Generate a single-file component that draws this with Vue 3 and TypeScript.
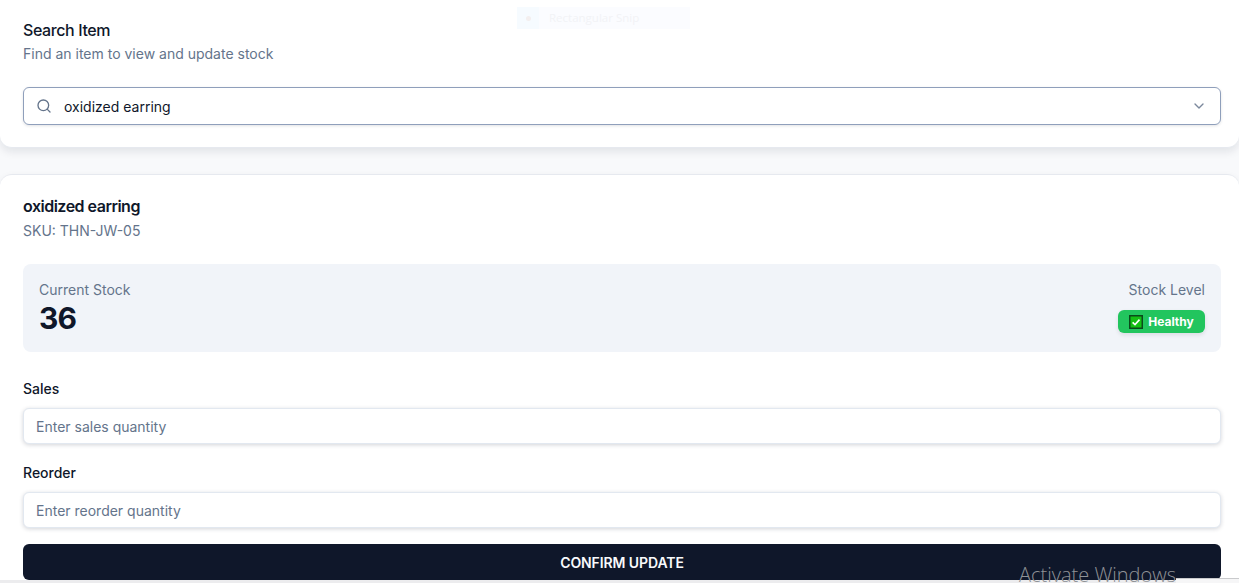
<script setup lang="ts">
const itemName: string = 'oxidized earring'
</script>

<template>
  <div class="page">
    <section class="card search-card">
      <h2 class="title">Search Item</h2>
      <p class="sub">Find an item to view and update stock</p>
      <div class="combo">
        <svg class="ico" width="16" height="16" viewBox="0 0 24 24" fill="none" stroke="#64748b" stroke-width="2" stroke-linecap="round" stroke-linejoin="round"><circle cx="11" cy="11" r="8" /><path d="m21 21-4.3-4.3" /></svg>
        <span class="combo-text">{{ itemName }}</span>
        <svg class="chev" width="16" height="16" viewBox="0 0 24 24" fill="none" stroke="#64748b" stroke-width="2" stroke-linecap="round" stroke-linejoin="round"><path d="m6 9 6 6 6-6" /></svg>
      </div>
    </section>

    <section class="card item-card">
      <h2 class="title name">{{ itemName }}</h2>
      <p class="sku">SKU: THN-JW-05</p>

      <div class="stock">
        <div class="stock-left">
          <div class="muted">Current Stock</div>
          <div class="num">36</div>
        </div>
        <div class="stock-right">
          <div class="muted">Stock Level</div>
          <span class="badge"><span class="emoji"><svg width="14" height="14" viewBox="0 0 14 14"><rect x="0.75" y="0.75" width="12.5" height="12.5" fill="#14bf14" stroke="#0a4a1c" stroke-width="1.5" /><path d="M3.6 7.3 6 9.6 10.5 4.6" fill="none" stroke="#fff" stroke-width="1.6" /></svg></span>Healthy</span>
        </div>
      </div>

      <label class="lbl">Sales</label>
      <input class="field" placeholder="Enter sales quantity" />
      <label class="lbl lbl2">Reorder</label>
      <input class="field" placeholder="Enter reorder quantity" />
      <button class="confirm">CONFIRM UPDATE</button>
    </section>

    <div class="snip"><span class="snip-ico"><i></i></span><span class="snip-text">Rectangular Snip</span></div>
    <div class="strip"></div>
    <div class="edge"></div>
    <div class="activate">Activate Windows</div>
  </div>
</template>

<style>
html, body { margin: 0; padding: 0; background: #f8f9fb; overflow: hidden; }
</style>

<style scoped>
.page {
  position: relative;
  width: 1239px;
  height: 583px;
  overflow: hidden;
  font-family: Inter, "Liberation Sans", sans-serif;
  color: #0f172a;
  background: #f8f9fb;
}
.card {
  background: #fff;
  border-radius: 12px;
  box-sizing: border-box;
  padding-left: 23px;
  padding-right: 18px;
  box-shadow: 0 4px 8px rgba(15, 23, 42, 0.09);
}
.search-card {
  margin-top: -12px;
  height: 160px;
  padding-top: 31px;
  border-bottom: 1px solid #e6e9ef;
}
.item-card {
  margin-top: 26px;
  padding-top: 20px;
  height: 440px;
  border-top: 1px solid #e6e9ef;
}
.title {
  margin: 0;
  font-size: 16px;
  line-height: 22px;
  font-weight: 500;
  letter-spacing: -0.4px;
}
.name { font-weight: 600; letter-spacing: -0.5px; }
.sub {
  margin: 3px 0 0;
  font-size: 14px;
  line-height: 20px;
  color: #64748b;
}
.combo {
  margin-top: 23px;
  height: 38px;
  box-sizing: border-box;
  border: 1px solid #8f9fbb;
  border-radius: 6px;
  display: flex;
  align-items: center;
  padding: 0 13px 0 12px;
  box-shadow: 0 1px 3px rgba(15, 23, 42, 0.12);
  background: #fff;
}
.combo-text { margin-left: 12px; font-size: 14px; flex: 1; color: #0f172a; }
.chev { opacity: 0.85; }
.sku {
  margin: 4px 0 0;
  font-size: 14px;
  line-height: 20px;
  color: #64748b;
}
.stock {
  margin-top: 23px;
  height: 88px;
  background: #f1f4f9;
  border-radius: 8px;
  box-sizing: border-box;
  padding: 16px;
  display: flex;
  justify-content: space-between;
}
.muted { font-size: 14px; line-height: 20px; color: #64748b; }
.num { font-size: 30px; line-height: 36px; font-weight: 700; letter-spacing: -0.75px; color: #0f172a; }
.stock-right { display: flex; flex-direction: column; align-items: flex-end; }
.badge {
  margin-top: 10px;
  height: 23px;
  width: 87px;
  box-sizing: border-box;
  background: #22c55e;
  color: #fff;
  font-size: 12px;
  font-weight: 700;
  border-radius: 6px;
  display: inline-flex;
  align-items: center;
  justify-content: center;
  gap: 5px;
  box-shadow: 0 2px 4px rgba(15, 23, 42, 0.1);
}
.emoji { display: inline-flex; }
.lbl {
  display: block;
  margin-top: 27px;
  font-size: 14px;
  line-height: 20px;
  font-weight: 500;
}
.lbl2 { margin-top: 19px; }
.field {
  display: block;
  width: 100%;
  height: 36px;
  margin-top: 9px;
  box-sizing: border-box;
  border: 1px solid #e2e8f0;
  border-radius: 6px;
  padding: 0 12px;
  font: 14px Inter, "Liberation Sans", sans-serif;
  color: #0f172a;
  background: #fff;
  box-shadow: 0 1px 4px rgba(15, 23, 42, 0.18);
  outline: none;
}
.field::placeholder { color: #64748b; opacity: 1; }
.confirm {
  display: block;
  width: 100%;
  height: 36px;
  margin-top: 16px;
  border: 0;
  border-radius: 6px;
  background: #0f172a;
  color: #f8fafc;
  font: 600 14px Inter, "Liberation Sans", sans-serif;
  letter-spacing: -0.1px;
}
.snip {
  position: absolute;
  left: 517px;
  top: 7px;
  width: 173px;
  height: 22px;
  display: flex;
  background: #fbfcff;
}
.snip-ico {
  width: 22px;
  height: 22px;
  background: #f6fbff;
  display: flex;
  align-items: center;
  justify-content: center;
  margin-right: 2px;
}
.snip-ico i { width: 5px; height: 5px; border-radius: 50%; background: #f3efef; }
.snip-text {
  margin-left: 8px;
  font: 11.5px/22px "Open Sans", sans-serif;
  color: #f2f3f6;
}
.strip {
  position: absolute;
  left: 0;
  right: 0;
  top: 580px;
  height: 3px;
  background: #ececee;
}
.edge {
  position: absolute;
  left: 1176px;
  right: 0;
  top: 578px;
  height: 5px;
  box-sizing: border-box;
  border-top: 1px solid #c9cacc;
  background: #f6f6f7;
}
.activate {
  position: absolute;
  left: 1019px;
  top: 562px;
  font: 300 20px/26px "Open Sans", "Noto Sans", sans-serif;
  color: #8f9296;
  white-space: nowrap;
}
</style>
